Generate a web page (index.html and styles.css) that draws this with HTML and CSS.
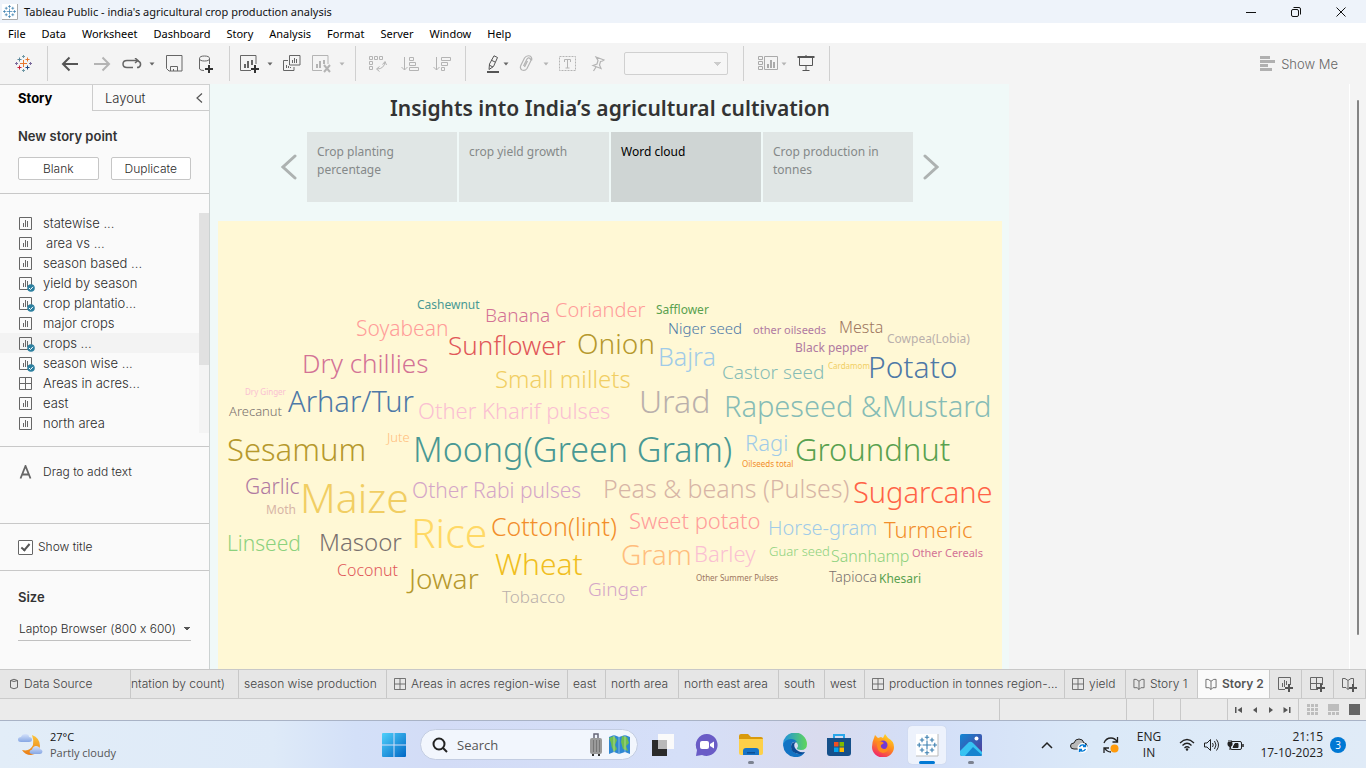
FILE: index.html
```html
<!DOCTYPE html>
<html lang="en">
<head>
<meta charset="utf-8">
<title>Tableau Public - india's agricultural crop production analysis</title>
<link rel="stylesheet" href="styles.css">
</head>
<body>
<svg class="sprite" aria-hidden="true">
  <defs>
    <linearGradient id="winBlue" x1="0" y1="0" x2="1" y2="1"><stop offset="0" stop-color="#4fd0fb"/><stop offset="1" stop-color="#0067c5"/></linearGradient>
    <linearGradient id="edgeA" x1="0" y1="0" x2="1" y2="0"><stop offset="0" stop-color="#1f8fe0"/><stop offset="1" stop-color="#5fd65a"/></linearGradient>
    <linearGradient id="fox" x1="0.8" y1="0" x2="0.3" y2="1"><stop offset="0" stop-color="#ffe226"/><stop offset="0.5" stop-color="#ff8a1e"/><stop offset="1" stop-color="#f0226b"/></linearGradient>
    <linearGradient id="photo" x1="0" y1="0" x2="1" y2="1"><stop offset="0" stop-color="#1187d4"/><stop offset="1" stop-color="#5a3796"/></linearGradient>
    <linearGradient id="moon" x1="0" y1="0" x2="0" y2="1"><stop offset="0" stop-color="#fbc53c"/><stop offset="1" stop-color="#ea7c14"/></linearGradient>
    <linearGradient id="cloudFill" x1="0" y1="0" x2="0" y2="1"><stop offset="0" stop-color="#d5e2fb"/><stop offset="1" stop-color="#86a7e4"/></linearGradient>
  </defs>
  <symbol id="sheet" viewBox="0 0 13 13"><path d="M.5.5h12v12H.5zM4.500 6v4M6.500 3v7M8.500 4v6" fill="none" stroke="#666"/></symbol>
  <symbol id="dash" viewBox="0 0 13 13"><path d="M.5.5h12v12H.5zM6.500.5v12M.5 6.500h12" fill="none" stroke="#666"/></symbol>
  <symbol id="book" viewBox="0 0 12 13"><path d="M6 3.500v9M6 12.500L4 10.500H.5v-9H3l3 2 3-2h2.500v9H8z" fill="none" stroke="#666"/></symbol>
  <symbol id="used" viewBox="0 0 8 8"><circle cx="4" cy="4" r="3.800" fill="#2c7f9f"/><path d="M2 4l1.500 1.500L6 2.800" fill="none" stroke="#fff"/></symbol>
  <symbol id="plus" viewBox="0 0 8 8"><path d="M4 0v8M0 4h8" fill="none" stroke="#555" stroke-width="2"/></symbol>
  <symbol id="caret" viewBox="0 0 6 4"><path d="M.5.5h5L3 3.500z" fill="currentColor"/></symbol>
  <symbol id="bluelogo" viewBox="0 0 18 18"><path d="M9 5v8M5 9h8M9 0v4M7 2h4M9 14v4M7 16h4M0 9h4M2 7v4M14 9h4M16 7v4M4.500 2.500v4M2.500 4.500h4M13.500 2.500v4M11.500 4.500h4M4.500 11.500v4M2.500 13.500h4M13.500 11.500v4M11.500 13.500h4" fill="none" stroke="#3b7fb0" stroke-width="1"/></symbol>
</svg>

<header class="titlebar">
  <svg class="app-icon" viewBox="0 0 16 16"><path fill="#fff" d="M0 0h16v16H0z"/><path d="M15.500 0v15.500H0" fill="none" stroke="#aaa"/><use href="#bluelogo" x="1" y="1" width="13" height="13"/></svg>
  <span class="app-title">Tableau Public - india's agricultural crop production analysis</span>
  <div class="window-buttons">
    <button aria-label="Minimize"><svg width="12" height="12"><path d="M1 6.500h10" stroke="#111"/></svg></button>
    <button aria-label="Restore"><svg width="12" height="12" fill="none" stroke="#111"><rect x="1.500" y="3.500" width="7" height="7" rx="1.500"/><path d="M3.500 1.500H9q1.500 0 1.500 1.500v5.500"/></svg></button>
    <button aria-label="Close"><svg width="12" height="12"><path d="M1.500 1.500l9 9M10.500 1.500l-9 9" stroke="#111"/></svg></button>
  </div>
</header>

<nav class="menubar" aria-label="Main menu">
  <button>File</button><button>Data</button><button>Worksheet</button><button>Dashboard</button><button>Story</button><button>Analysis</button><button>Format</button><button>Server</button><button>Window</button><button>Help</button>
</nav>

<div class="toolbar">
  <div class="group home">
    <button class="tool" aria-label="Start page"><svg width="18" height="18" fill="none" stroke-width="1"><path d="M8.500 5v7M5 8.500h7" stroke="#e8762c"/><path d="M8.500 0v3M7 1.500h3M8.500 14v3M7 15.500h3" stroke="#7099a6"/><path d="M0 8.500h3M1.500 7v3M14 8.500h3M15.500 7v3" stroke="#7b6b9c"/><path d="M4.500 2.500v4M2.500 4.500h4" stroke="#59879b"/><path d="M12.500 2.500v4M10.500 4.500h4" stroke="#e8762c"/><path d="M4.500 10.500v4M2.500 12.500h4" stroke="#c72035"/><path d="M12.500 10.500v4M10.500 12.500h4" stroke="#1f457e"/></svg></button>
  </div>
  <div class="group">
    <button class="tool wide" aria-label="Undo"><svg width="18" height="16" fill="none" stroke="#555" stroke-width="2"><path d="M17 8H2M8.500 1.500L2 8l6.500 6.500"/></svg></button>
    <button class="tool wide" aria-label="Redo"><svg width="18" height="16" fill="none" stroke="#b4b4b4" stroke-width="2"><path d="M1 8h15M9.500 1.500L16 8l-6.500 6.500"/></svg></button>
    <button class="tool" aria-label="Replay"><svg width="20" height="12" fill="none" stroke="#666" stroke-width="1.500"><path d="M11 9.500H5Q1 9.500 1 6T5 2.500h10M13 0l3 2.500L13 5M16 3q3 1 2.500 4-.5 2.500-3.500 2.500"/></svg></button><button class="caret" aria-label="Replay options"><svg width="6" height="4"><use href="#caret"/></svg></button>
    <button class="tool wide" aria-label="Save"><svg width="17" height="17" fill="none" stroke="#666"><path d="M.5.5h15.500v15.500H3L.5 13.500zM4.500 16v-4.500h7V16M7.500 14v2"/></svg></button>
    <button class="tool wide" aria-label="New data source"><svg width="16" height="18" fill="none" stroke="#666"><ellipse cx="6.500" cy="3.500" rx="5" ry="2.500"/><path d="M1.500 3.500v10.500q1 1.500 4.500 1.500M11.500 3.500V9"/><path d="M11 10v8M7 14h8" stroke="#333" stroke-width="2"/></svg></button>
  </div>
  <div class="group">
    <button class="tool" aria-label="New worksheet"><svg width="20" height="18" fill="none" stroke="#666"><path d="M11 15.500H.5V.5h15.500V9"/><path d="M5 9v4M8 6v7M12 5v5" stroke-width="2"/><path d="M15 10v8M11 14h8" stroke="#333" stroke-width="2"/></svg></button><button class="caret" aria-label="New options"><svg width="6" height="4"><use href="#caret"/></svg></button>
    <button class="tool wide" aria-label="Duplicate"><svg width="18" height="17" fill="none" stroke="#666"><path d="M6.500.5h10.500v9.500H6.500zM5 5.500H.5v10h10.500V12M9.500 5v3M11.500 3v5M13.500 4v4M3.500 10v3M5.500 11v2M7.500 12v1"/></svg></button>
    <button class="tool off" aria-label="Clear sheet"><svg width="20" height="18" fill="none" stroke="#b4b4b4"><path d="M10 15.500H.5V.5h15.500V9"/><path d="M5 9v4M8 6v7M12 5v4" stroke-width="2"/><path d="M12 10l6 7M18 10l-6 7" stroke-width="2"/></svg></button><button class="caret off" aria-label="Clear options"><svg width="6" height="4"><use href="#caret"/></svg></button>
  </div>
  <div class="group">
    <button class="tool wide" aria-label="Swap rows and columns"><svg width="18" height="17" fill="none" stroke="#b4b4b4"><path d="M.5 1.500h3v3h-3zM5.500 1.500h3v3h-3zM10.500 1.500h3v3h-3zM.5 6.500h3v3h-3zM.5 11.500h3v3h-3zM8 14q7 0 8-7M13.500 9.500L16 6.500l1.500 3.500M10.500 11.500L7.500 14l3 2.500"/></svg></button>
    <button class="tool wide" aria-label="Sort ascending"><svg width="18" height="16" fill="none" stroke="#b4b4b4"><path d="M3.500 1v13M.5 11l3 3 3-3M8.500 1.500h4v3h-4zM8.500 6.500h6v3h-6zM8.500 11.500h9v3h-9z"/></svg></button>
    <button class="tool wide" aria-label="Sort descending"><svg width="18" height="16" fill="none" stroke="#b4b4b4"><path d="M3.500 1v13M.5 11l3 3 3-3M8.500 1.500h9v3h-9zM8.500 6.500h6v3h-6zM8.500 11.500h3v3h-3z"/></svg></button>
  </div>
  <div class="group">
    <button class="tool right" aria-label="Highlight"><svg width="14" height="18" fill="none" stroke="#555"><path d="M8 .8l3.500 1.700-4 9-4.500 3 .5-5.500zM5 5l4 2M3 10l4 2"/><path d="M1 17h12" stroke-width="2"/></svg></button><button class="caret" aria-label="Highlight options"><svg width="6" height="4"><use href="#caret"/></svg></button>
    <button class="tool" aria-label="Group members"><svg width="14" height="17" fill="none" stroke="#b4b4b4" stroke-width="1.200"><path d="M4.500 11l3.500-7q1.500-2 3-.5t.5 3L8 13.500q-2 2.800-5 1.500-2.500-1.500-1.200-4.500L5.500 3q2-3 5.500-2 2.500 1.500 1.500 4.500M8.500 6L5.500 12"/></svg></button><button class="caret off" aria-label="Group options"><svg width="6" height="4"><use href="#caret"/></svg></button>
    <button class="tool wide" aria-label="Show mark labels"><svg width="18" height="16" fill="none" stroke="#b4b4b4"><rect x=".5" y=".5" width="16" height="14" stroke-dasharray="2 1"/><path d="M5.500 6V3.500h6V6M8.500 3.500V12M6.500 12h4"/></svg></button>
    <button class="tool" aria-label="Fix axes"><svg width="14" height="16" fill="none" stroke="#b4b4b4" stroke-width="1.200"><path d="M5 1l8 3-1.500 1-2 .5L8.500 9l1.500 3.500L2 9.500l4-1.500 1-3.500zM5 11l-2.500 4"/></svg></button>
    <select class="fit" aria-label="Fit" disabled><option></option></select>
  </div>
  <div class="group">
    <button class="tool right" aria-label="Show cards"><svg width="20" height="15" fill="none" stroke="#aaa"><path d="M.5.5h4v3h-4zM.5 5.500h4v3h-4zM.5 10.500h4v3h-4zM6.500.5h13v13h-13z"/><path d="M10 8v4M13 4v8M16 6v6" stroke-width="2"/></svg></button><button class="caret off" aria-label="Card options"><svg width="6" height="4"><use href="#caret"/></svg></button>
    <button class="tool wide" aria-label="Presentation mode"><svg width="18" height="17" fill="none" stroke="#555"><path d="M.5 2h17" stroke-width="2"/><path d="M2.500 3v7.500h13V3M9 11v5M5.500 15.500h7M9 0v1"/></svg></button>
  </div>
  <button class="showme"><svg width="15" height="15" fill="#b0b0b0"><path d="M0 0h10v3H0zM0 4h15v3H0zM0 8h8v3H0zM0 12h12v3H0z"/></svg>Show Me</button>
</div>

<main class="workspace">
  <aside class="sidebar">
    <div class="side-tabs">
      <button class="side-tab active">Story</button>
      <button class="side-tab rest">Layout<svg width="7" height="10" fill="none" stroke="#555" stroke-width="1.200"><path d="M6 .5L1 5l5 4.500"/></svg></button>
    </div>
    <section class="points">
      <h2>New story point</h2>
      <div class="point-buttons"><button>Blank</button><button>Duplicate</button></div>
    </section>
    <section class="sheets">
      <ul>
        <li><svg class="ic"><use href="#sheet"/></svg>statewise ...</li>
        <li class="inset"><svg class="ic"><use href="#sheet"/></svg>area vs ...</li>
        <li><svg class="ic"><use href="#sheet"/></svg>season based ...</li>
        <li class="used"><svg class="ic"><use href="#sheet"/></svg><svg class="tick"><use href="#used"/></svg>yield by season</li>
        <li class="used"><svg class="ic"><use href="#sheet"/></svg><svg class="tick"><use href="#used"/></svg>crop plantatio...</li>
        <li><svg class="ic"><use href="#sheet"/></svg>major crops</li>
        <li class="used current"><svg class="ic"><use href="#sheet"/></svg><svg class="tick"><use href="#used"/></svg>crops ...</li>
        <li class="used"><svg class="ic"><use href="#sheet"/></svg><svg class="tick"><use href="#used"/></svg>season wise ...</li>
        <li><svg class="ic"><use href="#dash"/></svg>Areas in acres...</li>
        <li><svg class="ic"><use href="#sheet"/></svg>east</li>
        <li><svg class="ic"><use href="#sheet"/></svg>north area</li>
      </ul>
      <div class="scroll"><div class="thumb"></div></div>
    </section>
    <section class="drag"><svg width="13" height="14" fill="none" stroke="#666" stroke-width="1.800"><path d="M1.500 13.500L6.500 1l5 12.500M3.200 9.500h6.600"/></svg>Drag to add text</section>
    <section class="show-title"><label><input type="checkbox" checked>Show title</label></section>
    <section class="size">
      <h2 id="size-label">Size</h2>
      <select aria-labelledby="size-label"><option>Laptop Browser (800 x 600)</option></select>
    </section>
  </aside>

  <article class="story">
    <h1>Insights into India’s agricultural cultivation</h1>
    <nav class="navigator" aria-label="Story points">
      <button class="arrow" aria-label="Previous"><svg width="16" height="26" fill="none" stroke="#adb2b1" stroke-width="3" stroke-linecap="round"><path d="M14 2L2 13l12 11"/></svg></button>
      <button class="card">Crop planting percentage</button>
      <button class="card">crop yield growth</button>
      <button class="card on">Word cloud</button>
      <button class="card">Crop production in tonnes</button>
      <button class="arrow" aria-label="Next"><svg width="16" height="26" fill="none" stroke="#adb2b1" stroke-width="3" stroke-linecap="round"><path d="M2 2l12 11L2 24"/></svg></button>
    </nav>
    <div class="viz">
      <svg class="cloud" viewBox="218 221 784 448" width="784" height="448" role="img" aria-label="Word cloud of crops">
        <text class="fine" x="417" y="309" font-size="12" fill="#499894">Cashewnut</text>
        <text x="485" y="322" font-size="19" fill="#d37295">Banana</text>
        <text x="555" y="317" font-size="20" fill="#ff9d9a">Coriander</text>
        <text class="fine" x="656" y="314" font-size="12" fill="#59a14f">Safflower</text>
        <text x="356" y="336" font-size="21" fill="#ff9d9a">Soyabean</text>
        <text x="668" y="334" font-size="15" fill="#4e79a7">Niger seed</text>
        <text class="fine" x="753" y="334" font-size="11" fill="#b07aa1">other oilseeds</text>
        <text x="839" y="333" font-size="16" fill="#9d7660">Mesta</text>
        <text class="fine" x="887" y="343" font-size="12" fill="#bab0ac">Cowpea(Lobia)</text>
        <text x="448" y="355" font-size="26" fill="#e15759">Sunflower</text>
        <text x="577" y="354" font-size="28" fill="#b6992d">Onion</text>
        <text class="fine" x="795" y="352" font-size="12" fill="#b07aa1">Black pepper</text>
        <text x="658" y="366" font-size="25" fill="#a0cbe8">Bajra</text>
        <text x="302" y="373" font-size="26" fill="#d37295">Dry chillies</text>
        <text x="722" y="379" font-size="19" fill="#86bcb6">Castor seed</text>
        <text class="fine" x="828" y="369" font-size="8" fill="#f1ce63">Cardamom</text>
        <text x="868" y="378" font-size="30" fill="#4e79a7">Potato</text>
        <text x="495" y="388" font-size="24" fill="#f1ce63">Small millets</text>
        <text class="fine" x="245" y="395" font-size="8" fill="#fabfd2">Dry Ginger</text>
        <text x="229" y="416" font-size="13" fill="#79706e">Arecanut</text>
        <text x="288" y="412" font-size="29" fill="#4e79a7">Arhar/Tur</text>
        <text x="418" y="419" font-size="22" fill="#fabfd2">Other Kharif pulses</text>
        <text x="639" y="413" font-size="32" fill="#bab0ac">Urad</text>
        <text x="724" y="417" font-size="29" fill="#86bcb6">Rapeseed &amp;Mustard</text>
        <text x="227" y="461" font-size="31" fill="#b6992d">Sesamum</text>
        <text x="387" y="442" font-size="13" fill="#ffbe7d">Jute</text>
        <text x="413" y="462" font-size="34" fill="#499894">Moong(Green Gram)</text>
        <text x="745" y="451" font-size="22" fill="#a0cbe8">Ragi</text>
        <text class="fine" x="742" y="467" font-size="8" fill="#f28e2b">Oilseeds total</text>
        <text x="795" y="461" font-size="31" fill="#59a14f">Groundnut</text>
        <text x="245" y="494" font-size="21" fill="#b07aa1">Garlic</text>
        <text x="300" y="513" font-size="41" fill="#f1ce63">Maize</text>
        <text x="412" y="498" font-size="21" fill="#d4a6c8">Other Rabi pulses</text>
        <text x="603" y="498" font-size="25" fill="#d7b5a6">Peas &amp; beans (Pulses)</text>
        <text x="853" y="503" font-size="29" fill="#ff6347">Sugarcane</text>
        <text class="fine" x="266" y="514" font-size="12" fill="#d7b5a6">Moth</text>
        <text x="411" y="548" font-size="41" fill="#ffd966">Rice</text>
        <text x="491" y="536" font-size="25" fill="#f28e2b">Cotton(lint)</text>
        <text x="629" y="529" font-size="22" fill="#ff9d9a">Sweet potato</text>
        <text x="768" y="535" font-size="20" fill="#a0cbe8">Horse-gram</text>
        <text x="884" y="538" font-size="22" fill="#f28e2b">Turmeric</text>
        <text x="227" y="551" font-size="21" fill="#8cd17d">Linseed</text>
        <text x="319" y="551" font-size="24" fill="#79706e">Masoor</text>
        <text x="621" y="565" font-size="28" fill="#ffbe7d">Gram</text>
        <text x="694" y="562" font-size="22" fill="#fabfd2">Barley</text>
        <text x="769" y="556" font-size="13" fill="#8cd17d">Guar seed</text>
        <text x="831" y="562" font-size="16" fill="#8cd17d">Sannhamp</text>
        <text class="fine" x="912" y="557" font-size="11" fill="#d37295">Other Cereals</text>
        <text x="337" y="576" font-size="16" fill="#e15759">Coconut</text>
        <text x="495" y="575" font-size="30" fill="#f0be20">Wheat</text>
        <text x="409" y="589" font-size="28" fill="#b6992d">Jowar</text>
        <text x="502" y="603" font-size="17" fill="#bab0ac">Tobacco</text>
        <text x="588" y="596" font-size="19" fill="#d4a6c8">Ginger</text>
        <text class="fine" x="696" y="581" font-size="8" fill="#9d7660">Other Summer Pulses</text>
        <text x="829" y="582" font-size="14" fill="#79706e">Tapioca</text>
        <text class="fine" x="879" y="583" font-size="12" fill="#59a14f">Khesari</text>
      </svg>
    </div>
  </article>
  <div class="gutter"><div class="gutter-thumb"></div></div>
</main>

<nav class="sheet-tabs" aria-label="Sheets">
  <button class="w-source"><svg width="10" height="12" fill="none" stroke="#666"><path d="M1.500 2.500q3.500-2.500 7 0v7q-3.500 2.500-7 0zM1.500 2.500q3.500 2 7 0"/></svg>Data Source</button>
  <button class="w-count">ntation by count)</button>
  <button class="w-season">season wise production</button>
  <button class="w-areas"><svg class="ic"><use href="#dash"/></svg>Areas in acres region-wise</button>
  <button class="w-east">east</button>
  <button class="w-north">north area</button>
  <button class="w-ne">north east area</button>
  <button class="w-south">south</button>
  <button class="w-west">west</button>
  <button class="w-prod"><svg class="ic"><use href="#dash"/></svg>production in tonnes region-...</button>
  <button class="w-yield"><svg class="ic"><use href="#dash"/></svg>yield</button>
  <button class="w-story"><svg class="ic"><use href="#book"/></svg>Story 1</button>
  <button class="w-story active"><svg class="ic"><use href="#book"/></svg>Story 2</button>
  <button class="w-new" aria-label="New worksheet"><svg width="16" height="15"><use href="#sheet" width="13" height="13"/><path d="M7 8h9v7H7z" fill="#e6e6e6"/><use href="#plus" x="7" y="7" width="8" height="8"/></svg></button>
  <button class="w-new" aria-label="New dashboard"><svg width="16" height="15"><use href="#dash" width="13" height="13"/><path d="M8 8h8v7H8z" fill="#e6e6e6"/><use href="#plus" x="7" y="7" width="8" height="8"/></svg></button>
  <button class="w-new" aria-label="New story"><svg width="16" height="15"><use href="#book" width="12" height="13"/><path d="M8 8h8v7H8z" fill="#e6e6e6"/><use href="#plus" x="7" y="7" width="8" height="8"/></svg></button>
</nav>

<div class="statusbar">
  <span class="cell c127"></span><span class="cell c27"></span><span class="cell c27"></span><span class="cell c47"></span>
  <span class="cell pager">
    <button aria-label="First"><svg width="8" height="8" fill="#555"><path d="M0 1h1.500v6H0zM7 1v6L2.500 4z"/></svg></button>
    <button aria-label="Previous"><svg width="8" height="8" fill="#555"><path d="M6 1v6L2 4z"/></svg></button>
    <button aria-label="Next"><svg width="8" height="8" fill="#555"><path d="M2 1v6l4-3z"/></svg></button>
    <button aria-label="Last"><svg width="8" height="8" fill="#555"><path d="M6 1h1.500v6H6zM.5 1v6L5 4z"/></svg></button>
  </span>
  <span class="cell views">
    <button aria-label="Sheet sorter"><svg width="11" height="11" fill="#bdbdbd"><path d="M0 0h3v3H0zM4 0h3v3H4zM8 0h3v3H8zM0 4h3v3H0zM4 4h3v3H4zM8 4h3v3H8zM0 8h3v3H0zM4 8h3v3H4zM8 8h3v3H8z"/></svg></button>
    <button aria-label="Filmstrip"><svg width="11" height="11" fill="#bdbdbd"><path d="M0 0h11v7H0zM0 8h3v3H0zM4 8h3v3H4zM8 8h3v3H8z"/></svg></button>
    <button aria-label="Tabs"><svg width="11" height="11"><path d="M0 0h11v11H0z" fill="#666"/></svg></button>
  </span>
</div>

<footer class="taskbar">
  <button class="weather">
    <svg width="26" height="24"><path d="M14 2q8 3 8 11-1 8-9 9-6 0-9-5 8 2 11-5 1-5-1-10z" fill="url(#moon)"/><path d="M3 9q-3 0-3-2.500T3 4Q4 1 7.500 1T11 4q3 0 3 2.500T11 9z" fill="url(#cloudFill)"/><path d="M14 21q-2.500 0-2.500-2t2.500-2.500Q15 13 18 13t4 3q2.500.5 2.500 2.500T22 21z" fill="url(#cloudFill)"/></svg>
    <span class="two"><span class="dark">27°C</span><span>Partly cloudy</span></span>
  </button>
  <div class="apps">
    <button class="start" aria-label="Start"><svg width="24" height="24" fill="url(#winBlue)"><path d="M0 1q0-1 1-1h10.500v11.500H0zM12.500 0H23q1 0 1 1v10.500H12.500zM0 12.500h11.500V24H1q-1 0-1-1zM12.500 12.500H24V23q0 1-1 1H12.500z"/></svg></button>
    <label class="search"><svg width="16" height="16" fill="none" stroke="#222" stroke-width="2"><circle cx="7" cy="7" r="5.500"/><path d="M11 11l4 4"/></svg><input type="text" placeholder="Search" aria-label="Search">
      <svg width="42" height="24"><path d="M5 5V1h4v4" fill="none" stroke="#667" stroke-width="1.500"/><rect x="1" y="5" width="12" height="16" rx="2" fill="#9a9a9a"/><path d="M4.500 7v12M7.500 7v12M10.500 7v12" stroke="#777"/><path d="M3 21h2v2H3zM9 21h2v2H9z" fill="#333"/><path d="M20 4l5-2 5 2 6-2 5 2v17l-5-2-6 2-5-2-5 2z" fill="#2f87d2"/><path d="M20 5l5-2 3 4-2 5 2 4-3 3q-3-5-3-9zM33 3l5 1 2 6-3 3 2 5-5-2-2-7z" fill="#6fbf4f"/><path d="M25 2v17M30 4v17M36 2v17" stroke="#ffffff66"/></svg></label>
    <button class="app" aria-label="Task view"><svg width="24" height="24"><path d="M1 7h15v16H1z" fill="#2b2b2b"/><path d="M7 1h16v15H7z" fill="#fafafa"/><path d="M7 7h9v9H7z" fill="#b9b9b9"/></svg></button>
    <button class="app" aria-label="Chat"><svg width="24" height="24"><path d="M12 1a11 11 0 1 1-5 21l-6 1 1-6A11 11 0 0 1 12 1z" fill="#6a5cc6"/><rect x="5" y="8" width="9" height="8" rx="2" fill="#fff"/><path d="M15 11l4-2.500v7L15 13z" fill="#fff"/></svg></button>
    <button class="app run" aria-label="File Explorer"><svg width="24" height="24"><path d="M0 3q0-2 2-2h7l3 3h10q2 0 2 2v7H0z" fill="#d99a0d"/><path d="M0 6h24v14q0 2-2 2H2q-2 0-2-2z" fill="#fdd049"/><path d="M4 22v-4q0-3 3-3h10q3 0 3 3v4z" fill="#1673c7"/><path d="M8 19h8v1.500H8z" fill="#0b4f95"/></svg></button>
    <button class="app" aria-label="Edge"><svg width="24" height="24"><path d="M0 12A12 12 0 0 1 24 11q0 6-6 6-5 0-4-2 2-2 0-5Q8 5 0 12z" fill="url(#edgeA)"/><path d="M0 12q2-6 8-6 4 0 6 3-6-1-6 5 1 7 9 7 3 0 5-2-4 6-11 5Q1 22 0 12z" fill="#1273c4"/><path d="M8 14q0-5 5-5-3 2-1 6 3 5 10 4-2 3-6 2-8-1-8-7z" fill="#0b4b94"/></svg></button>
    <button class="app" aria-label="Microsoft Store"><svg width="24" height="24"><path d="M7 6V2h10v4" fill="none" stroke="#2aa7ea" stroke-width="2"/><path d="M0 5h24v15q0 3-3 3H3q-3 0-3-3z" fill="#16508a"/><path d="M7 9h4.500v4.500H7z" fill="#f25022"/><path d="M12.500 9H17v4.500h-4.500z" fill="#7fba00"/><path d="M7 14.500h4.500V19H7z" fill="#00a4ef"/><path d="M12.500 14.500H17V19h-4.500z" fill="#ffb900"/></svg></button>
    <button class="app" aria-label="Firefox"><svg width="24" height="24"><path d="M3 5l1-3 3 3 3-1 2 1 2-4 3 4q6 3 6 9a11 10.500 0 0 1-22 0q0-5 2-9z" fill="url(#fox)"/><circle cx="12" cy="12" r="4.500" fill="#7338d5"/><path d="M6 9q4-2 7 1l-3 2q-1 3 3 4 4 0 5-3 0 6-6 7-7-1-6-11z" fill="#ff8a1e"/></svg></button>
    <button class="app run current" aria-label="Tableau"><svg width="24" height="24"><path d="M1 1h22v22H1z" fill="#fff"/><path d="M23 1v22H1" fill="none" stroke="#bbb"/><use href="#bluelogo" x="2" y="2" width="20" height="20"/></svg></button>
    <button class="app run" aria-label="Photos"><svg width="24" height="24"><rect x="1" y="1" width="22" height="22" rx="2" fill="url(#photo)"/><path d="M1 18l9-9q2-1 4 1l9 9v2q0 2-2 2H3q-2 0-2-2z" fill="#37c3f2"/><path d="M6 23l8-9 9 8-1 1z" fill="#1583cf"/><circle cx="17.500" cy="5.500" r="2" fill="#fff"/></svg></button>
  </div>
  <div class="tray">
    <button class="slot" aria-label="Hidden icons"><svg width="12" height="8" fill="none" stroke="#222" stroke-width="1.500"><path d="M1 7l5-5 5 5"/></svg></button>
    <button class="slot" aria-label="OneDrive"><svg width="18" height="16"><path d="M4 12q-3.500 0-3.500-3T4 6q1-4 5-4t5 4q3 0 3 3t-3 3z" fill="#b9b9b9" stroke="#222"/><circle cx="12.500" cy="11" r="5" fill="#fff"/><path d="M9.500 10q1-2.500 4-2 1 .3 2 1.500M15.500 7v2.500H13M15.500 12q-1 2.500-4 2-1-.3-2-1.500M9.500 15v-2.500H12" fill="none" stroke="#0078d4" stroke-width="1.300"/></svg></button>
    <button class="slot" aria-label="Updates"><svg width="18" height="18" fill="none" stroke="#222" stroke-width="1.300"><path d="M2 7q2-5 7-5 4 0 6.500 4M15.500 1v5h-5M9 16q-4 0-6.500-4M2 17v-5h5"/><circle cx="12.500" cy="12.500" r="4" fill="#ff9a0a" stroke="none"/></svg></button>
    <button class="lang two"><span>ENG</span><span>IN</span></button>
    <button class="small" aria-label="Network"><svg width="16" height="13" fill="none" stroke="#222" stroke-width="1.300"><path d="M1 5q7-7 14 0M3.500 7.500q4.500-4.500 9 0M5.500 10q2.500-2.500 5 0"/><circle cx="8" cy="11.500" r="1.200" fill="#222" stroke="none"/></svg></button>
    <button class="small" aria-label="Volume"><svg width="16" height="14" fill="none" stroke="#222"><path d="M1.500 5v4h2.500l3.500 3.500v-11L4 5zM9.500 5q1.500 2 0 4M11.500 3q3 4 0 8M13.500 1.500q4 5.500 0 11"/></svg></button>
    <button class="small" aria-label="Battery"><svg width="17" height="13" fill="none" stroke="#222"><rect x="3.500" y="3.500" width="11" height="8" rx="1.500"/><path d="M8 5.500h3v4H6z" fill="#222"/><path d="M16 6v3" stroke-width="1.500"/><path d="M1 4.500h4v2q0 2-2 2t-2-2z" fill="#222"/><path d="M2 2v2M4 2v2M3 8v4"/></svg></button>
    <button class="clock two"><span>21:15</span><span>17-10-2023</span></button>
    <span class="badge">3</span>
  </div>
</footer>
</body>
</html>
```

FILE: styles.css
```css
* { box-sizing: border-box; }
body {
  margin: 0;
  height: 100vh;
  display: grid;
  grid-template-rows: 23px 20px 41px minmax(0, 1fr) 30px 21px 48px;
  grid-template-columns: minmax(0, 1fr);
  overflow: hidden;
  font: 300 12px/16px Inter, "Liberation Sans", sans-serif;
  font-feature-settings: "calt" 0;
  color: #2c2c2c;
}
button { font: inherit; color: inherit; background: none; border: 0; padding: 0; margin: 0; text-align: left; }
svg { display: block; flex: none; }
h1, h2, ul { margin: 0; padding: 0; }
.sprite { position: absolute; width: 0; height: 0; }
.ic { width: 13px; height: 13px; }

/* Title and menus */
.titlebar { display: flex; align-items: center; background: #eef3fa; padding-left: 2px; gap: 6px; color: #111; }
.app-icon { width: 16px; height: 16px; }
.app-title, .menubar { font-family: "Noto Sans", "Open Sans", sans-serif; font-size: 11px; font-weight: 400; }
.window-buttons { margin-left: auto; margin-right: 3px; display: flex; }
.window-buttons button { width: 45px; height: 22px; display: grid; place-items: center; }
.menubar { display: flex; align-items: center; gap: 16px; padding: 1px 0 0 8px; background: #fff; color: #000; }

/* Toolbar */
.toolbar { display: flex; align-items: center; background: #f4f4f4; }
.group { display: flex; align-items: center; height: 35px; padding: 0 7px 0 6px; border-right: 1px solid #d0d0d0; box-sizing: content-box; }
.group.home { padding: 0; width: 47px; justify-content: center; }
.tool { width: 28px; height: 28px; display: grid; place-items: center; }
.tool.right { place-items: center end; }
.tool.wide { width: 32px; }
.caret { width: 12px; height: 28px; display: grid; place-items: center; color: #666; }
.caret.off { color: #b4b4b4; }
.fit {
  width: 104px; height: 23px; margin: 0 8px 0 12px; border: 1px solid #d0d0d0; border-radius: 2px; appearance: none; opacity: 1;
  background: linear-gradient(to bottom right, #ccc 50%, transparent 50%) 93px 9px / 4px 4px no-repeat,
    linear-gradient(to bottom left, #ccc 50%, transparent 50%) 89px 9px / 4px 4px no-repeat, #f6f6f6;
}
.showme { margin-left: auto; margin-right: 28px; display: flex; align-items: center; gap: 6px; font-size: 13px; color: #666; }

/* Workspace */
.workspace { display: grid; grid-template-columns: 210px 799px minmax(0, 1fr); overflow: hidden; background: #f4f4f4; }
.sidebar { background: #fafafa; border-right: 1px solid #ccd2d2; border-top: 1px solid #d0d0d0; display: flex; flex-direction: column; min-height: 0; }
.sidebar section { border-bottom: 1px solid #c8c8c8; flex: none; }
.sidebar h2 { font-size: 13px; line-height: 18px; font-weight: 600; color: #333; }
.side-tabs { display: flex; height: 26px; flex: none; font-size: 13px; }
.side-tab.active { width: 92px; padding-left: 18px; font-weight: 700; color: #000; }
.side-tab.rest { flex: 1; display: flex; align-items: center; justify-content: space-between; padding: 0 6px 0 12px; border-left: 1px solid #ccc; border-bottom: 1px solid #ccc; }
.points { padding: 16px 18px 13px; }
.point-buttons { display: flex; gap: 12px; margin-top: 12px; }
.point-buttons button { flex: 1; height: 23px; border: 1px solid #c6c6c6; border-radius: 2px; background: #fff; text-align: center; }
.sheets { display: flex; padding: 19px 0 13px; }
.sheets ul { flex: 1; list-style: none; font-size: 13px; }
.sheets li { height: 20px; padding-left: 19px; display: flex; align-items: center; gap: 11px; position: relative; white-space: nowrap; }
.sheets li.current { background: #f3f3f3; }
.sheets li.inset { gap: 14px; }
.tick { position: absolute; left: 27px; top: 11px; width: 8px; height: 8px; }
.scroll { width: 10px; background: #f4f4f4; }
.scroll .thumb { height: 69%; background: #e1e1e1; }
.drag { display: flex; align-items: center; gap: 11px; height: 77px; padding: 0 19px 26px; }
.show-title { height: 47px; padding: 15px 18px; }
.show-title label { display: flex; align-items: center; gap: 5px; }
.show-title input {
  appearance: none; width: 15px; height: 15px; margin: 0; border: 1px solid #666; border-radius: 1px; background: #fff;
  display: flex; justify-content: center;
}
.show-title input::after { content: ""; width: 3px; height: 7px; margin-top: 1px; border: solid #555; border-width: 0 2px 2px 0; transform: rotate(40deg); }
.sidebar .size { padding: 17px 18px; border: 0; }
.size select {
  appearance: none; font: inherit; color: inherit; width: 100%; height: 24px; margin-top: 11px; padding: 0 0 0 1px; border: 0; border-radius: 0; border-bottom: 1px solid #c0c0c0;
  background: linear-gradient(to bottom right, #555 50%, transparent 50%) right 0 top 10px / 4px 4px no-repeat,
    linear-gradient(to bottom left, #555 50%, transparent 50%) right 4px top 10px / 4px 4px no-repeat;
}

/* Story */
.story { background: #f0f9f8; font-family: "Noto Sans", "Open Sans", sans-serif; overflow: hidden; padding: 10px 7px 0 8px; }
.story h1 { font-size: 21px; line-height: 28px; font-weight: 600; color: #333; text-align: center; }
.navigator { display: flex; justify-content: center; gap: 2px; margin-top: 10px; height: 70px; }
.arrow { width: 32px; display: grid; place-items: center; }
.card { width: 150px; padding: 11px 10px; line-height: 18px; background: #e0e6e5; color: #858989; display: flex; font-weight: 400; }
.card.on { background: #cfd5d4; color: #000; }
.viz { margin-top: 19px; background: #fff8d5; }
.cloud text { font-weight: 300; }
.cloud .fine { font-weight: 400; }
.gutter { justify-self: end; width: 17px; border-left: 1px solid #fff; padding-left: 7px; padding-top: 16px; }
.gutter-thumb { width: 2px; height: 94%; background: #858585; border-radius: 1px; }

/* Sheet tabs */
.sheet-tabs { display: flex; background: #e6e6e6; border-top: 1px solid #c8c8c8; border-bottom: 1px solid #cbcbcb; color: #444; }
.sheet-tabs button { display: flex; align-items: center; gap: 5px; padding: 0 5px; border-right: 1px solid #c8c8c8; white-space: nowrap; flex: none; }
.sheet-tabs .ic { width: 12px; height: 12px; }
.sheet-tabs .active { background: #fafafa; font-weight: 600; color: #555; }
.sheet-tabs .w-source { width: 131px; padding-left: 9px; }
.sheet-tabs .w-count { width: 108px; padding: 0; }
.w-season { width: 148px; }
.w-areas { width: 181px; }
.w-east { width: 38px; }
.w-north { width: 73px; }
.w-ne { width: 100px; }
.w-south { width: 46px; }
.w-west { width: 40px; }
.w-prod { width: 200px; }
.w-yield { width: 61px; }
.w-story { width: 72px; }
.w-new { width: 32px; justify-content: center; }
.sheet-tabs .w-areas, .sheet-tabs .w-prod, .sheet-tabs .w-yield, .sheet-tabs .w-story { padding: 0 0 0 7px; }

/* Status bar */
.statusbar { display: flex; justify-content: flex-end; background: #ebebeb; }
.cell { border-left: 1px solid #c8c8c8; display: flex; align-items: center; }
.c127 { width: 127px; }
.c27 { width: 27px; }
.c47 { width: 47px; }
.pager { width: 71px; justify-content: space-between; padding: 0 7px; }
.views { width: 68px; justify-content: space-between; padding: 0 6px 0 8px; }

/* Taskbar */
.taskbar {
  display: grid; grid-template-columns: 1fr auto 1fr; align-items: center; border-top: 1px solid #a9b3c6; color: #222;
  background: linear-gradient(90deg, #e2edf8 0, #deeaf8 20%, #d3e0f8 26%, #d3dcf6 32%, #d5dff8 50%, #d9dbee 60%, #d3dff8 68%, #dbe9f8 80%, #e0ebf7 100%);
  font-family: "Open Sans", "Noto Sans", sans-serif; font-size: 11px; font-weight: 400;
}
.two { display: flex; flex-direction: column; }
.weather { display: flex; align-items: center; gap: 6px; padding-left: 18px; color: #555; }
.dark { color: #111; }
.apps { display: flex; align-items: center; gap: 6px; margin-left: 6px; }
.start { margin-right: 8px; }
.search { display: flex; align-items: center; gap: 9px; width: 218px; height: 31px; padding: 0 6px 0 11px; border: 1px solid #c3cde2; border-radius: 16px; background: #f2f6fd; }
.search input { flex: 1; min-width: 0; border: 0; background: none; padding: 0; font: inherit; font-size: 13px; }
.search input::placeholder { color: #555; opacity: 1; }
.app { width: 38px; height: 38px; display: grid; place-items: center; position: relative; border-radius: 4px; }
.app.current { background: #edf2fc; box-shadow: 0 0 1px #b5bfd2; }
.app.run::after { content: ""; position: absolute; left: 16px; bottom: 0; width: 6px; height: 3px; border-radius: 2px; background: #7c8290; }
.app.current::after { left: 11px; width: 16px; background: #0078d4; }
.tray { justify-self: end; display: flex; align-items: center; padding-right: 20px; }
.slot { width: 32px; display: grid; place-items: center; }
.lang { width: 44px; align-items: center; margin-right: 4px; }
.small { width: 24px; display: grid; place-items: center; }
.clock { width: 76px; align-items: flex-end; margin-right: 7px; }
.tray .two { font-size: 12px; }
.badge { width: 16px; height: 16px; border-radius: 50%; background: #0078d4; color: #fff; font-size: 10px; line-height: 16px; text-align: center; }
```
